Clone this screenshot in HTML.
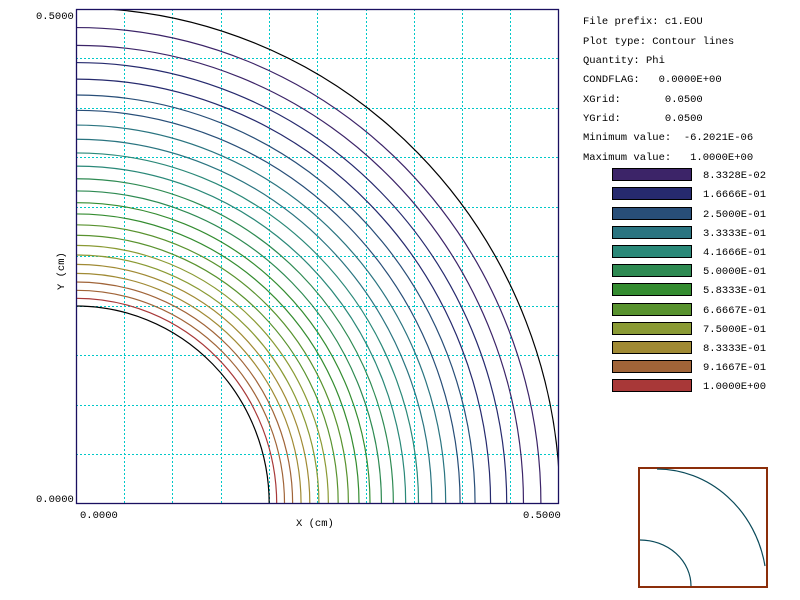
<!DOCTYPE html>
<html><head><meta charset="utf-8"><style>
html,body{margin:0;padding:0;background:#fff;width:800px;height:600px;overflow:hidden;}
svg{display:block}
text{font-family:"Liberation Mono",monospace;font-size:10.5px;fill:#000;white-space:pre}
</style></head><body>
<svg width="800" height="600" viewBox="0 0 800 600" xmlns="http://www.w3.org/2000/svg" xml:space="preserve">
<defs><clipPath id="c"><rect x="0" y="0" width="0.5" height="0.5"/></clipPath></defs>
<rect width="800" height="600" fill="#fff"/>
<g stroke="#00c8c8" stroke-width="1" stroke-dasharray="2,2">
<path d="M124.5 9V504M172.5 9V504M221.5 9V504M269.5 9V504M317.5 9V504M366.5 9V504M414.5 9V504M462.5 9V504M510.5 9V504"/>
<path d="M76 454.5H559M76 405.5H559M76 355.5H559M76 306.5H559M76 256.5H559M76 207.5H559M76 157.5H559M76 108.5H559M76 58.5H559"/>
</g>
<g transform="translate(76,504) scale(966,-990)" fill="none" stroke-width="1.2" clip-path="url(#c)">
<circle r="0.501" stroke="#000" vector-effect="non-scaling-stroke"/>
<circle r="0.2" stroke="#000" vector-effect="non-scaling-stroke"/>
<circle r="0.48127" stroke="#3c2468" vector-effect="non-scaling-stroke"/>
<circle r="0.46324" stroke="#3c2468" vector-effect="non-scaling-stroke"/>
<circle r="0.44589" stroke="#262a6e" vector-effect="non-scaling-stroke"/>
<circle r="0.42919" stroke="#262a6e" vector-effect="non-scaling-stroke"/>
<circle r="0.41311" stroke="#284e78" vector-effect="non-scaling-stroke"/>
<circle r="0.39764" stroke="#284e78" vector-effect="non-scaling-stroke"/>
<circle r="0.38274" stroke="#2a7480" vector-effect="non-scaling-stroke"/>
<circle r="0.36840" stroke="#2a7480" vector-effect="non-scaling-stroke"/>
<circle r="0.35460" stroke="#2a8878" vector-effect="non-scaling-stroke"/>
<circle r="0.34132" stroke="#2a8878" vector-effect="non-scaling-stroke"/>
<circle r="0.32853" stroke="#2e8a52" vector-effect="non-scaling-stroke"/>
<circle r="0.31623" stroke="#2e8a52" vector-effect="non-scaling-stroke"/>
<circle r="0.30438" stroke="#348c30" vector-effect="non-scaling-stroke"/>
<circle r="0.29298" stroke="#348c30" vector-effect="non-scaling-stroke"/>
<circle r="0.28200" stroke="#58922e" vector-effect="non-scaling-stroke"/>
<circle r="0.27144" stroke="#58922e" vector-effect="non-scaling-stroke"/>
<circle r="0.26127" stroke="#8a9a34" vector-effect="non-scaling-stroke"/>
<circle r="0.25148" stroke="#8a9a34" vector-effect="non-scaling-stroke"/>
<circle r="0.24206" stroke="#a08a34" vector-effect="non-scaling-stroke"/>
<circle r="0.23299" stroke="#a08a34" vector-effect="non-scaling-stroke"/>
<circle r="0.22427" stroke="#a06438" vector-effect="non-scaling-stroke"/>
<circle r="0.21587" stroke="#a06438" vector-effect="non-scaling-stroke"/>
<circle r="0.20778" stroke="#a83838" vector-effect="non-scaling-stroke"/>
</g>
<rect x="76.5" y="9.5" width="482" height="494" fill="none" stroke="#1a1060" stroke-width="1.3"/>
<text x="36" y="19">0.5000</text>
<text x="36" y="502">0.0000</text>
<text x="80" y="518">0.0000</text>
<text x="523" y="518">0.5000</text>
<text x="296" y="526">X (cm)</text>
<text transform="translate(64,290) rotate(-90)">Y (cm)</text>
<text x="583" y="24">File prefix: c1.EOU</text>
<text x="583" y="44">Plot type: Contour lines</text>
<text x="583" y="63">Quantity: Phi</text>
<text x="583" y="82">CONDFLAG:   0.0000E+00</text>
<text x="583" y="102">XGrid:       0.0500</text>
<text x="583" y="121">YGrid:       0.0500</text>
<text x="583" y="140">Minimum value:  -6.2021E-06</text>
<text x="583" y="160">Maximum value:   1.0000E+00</text>
<g stroke="#000" stroke-width="1">
<rect x="612.5" y="168.5" width="79" height="12" fill="#3c2468"/>
<rect x="612.5" y="187.5" width="79" height="12" fill="#262a6e"/>
<rect x="612.5" y="207.5" width="79" height="12" fill="#284e78"/>
<rect x="612.5" y="226.5" width="79" height="12" fill="#2a7480"/>
<rect x="612.5" y="245.5" width="79" height="12" fill="#2a8878"/>
<rect x="612.5" y="264.5" width="79" height="12" fill="#2e8a52"/>
<rect x="612.5" y="283.5" width="79" height="12" fill="#348c30"/>
<rect x="612.5" y="303.5" width="79" height="12" fill="#58922e"/>
<rect x="612.5" y="322.5" width="79" height="12" fill="#8a9a34"/>
<rect x="612.5" y="341.5" width="79" height="12" fill="#a08a34"/>
<rect x="612.5" y="360.5" width="79" height="12" fill="#a06438"/>
<rect x="612.5" y="379.5" width="79" height="12" fill="#a83838"/>
</g>
<text x="703" y="178">8.3328E-02</text>
<text x="703" y="197">1.6666E-01</text>
<text x="703" y="217">2.5000E-01</text>
<text x="703" y="236">3.3333E-01</text>
<text x="703" y="255">4.1666E-01</text>
<text x="703" y="274">5.0000E-01</text>
<text x="703" y="293">5.8333E-01</text>
<text x="703" y="313">6.6667E-01</text>
<text x="703" y="332">7.5000E-01</text>
<text x="703" y="351">8.3333E-01</text>
<text x="703" y="370">9.1667E-01</text>
<text x="703" y="389">1.0000E+00</text>
<rect x="639" y="468" width="128" height="119" fill="none" stroke="#8b2e0a" stroke-width="2"/>
<path d="M657 469 A110 118 0 0 1 765 566" fill="none" stroke="#0a4a5a" stroke-width="1.2"/>
<path d="M640 540 A51 46 0 0 1 691 586" fill="none" stroke="#0a4a5a" stroke-width="1.2"/>
</svg>
</body></html>
